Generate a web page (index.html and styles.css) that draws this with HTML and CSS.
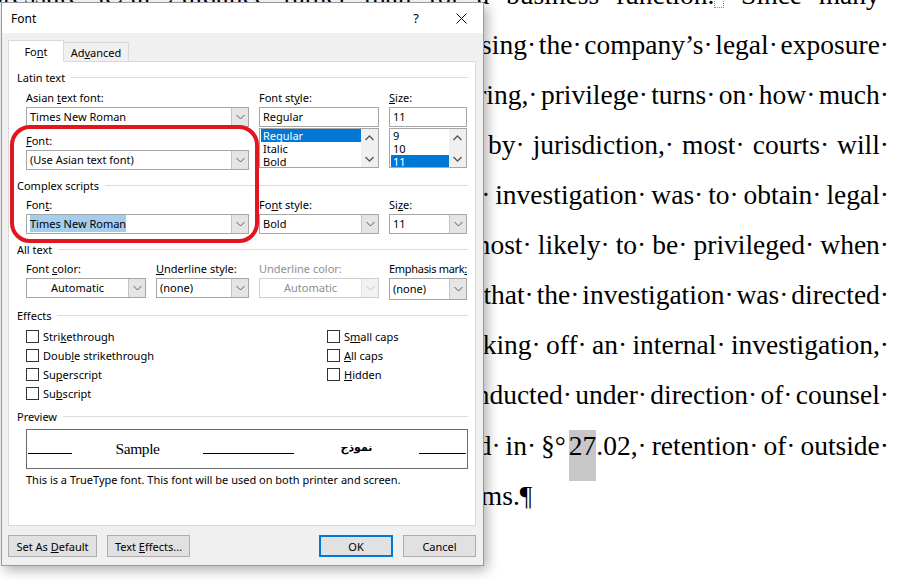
FILE: index.html
```html
<!DOCTYPE html>
<html>
<head>
<meta charset="utf-8">
<title>Font</title>
<link rel="stylesheet" href="styles.css">
</head>
<body>
<div class="doc">
  <div class="ln g75"><span>pressure·</span><span>legal·</span><span>guidance·</span><span>rather·</span><span>than·</span><span>for·</span><span>a·</span><span>business·</span><span>function.<i class="anchor"></i>·</span><span>Since·</span><span>many·</span></div>
  <div class="ln g27"><span>assessing·</span><span>the·</span><span>company’s·</span><span>legal·</span><span>exposure·</span></div>
  <div class="ln g34"><span>monitoring,·</span><span>privilege·</span><span>turns·</span><span>on·</span><span>how·</span><span>much·</span></div>
  <div class="ln g80"><span>varies·</span><span>by·</span><span>jurisdiction,·</span><span>most·</span><span>courts·</span><span>will·</span></div>
  <div class="ln g49"><span>the·</span><span>investigation·</span><span>was·</span><span>to·</span><span>obtain·</span><span>legal·</span></div>
  <div class="ln g61"><span>are·</span><span>most·</span><span>likely·</span><span>to·</span><span>be·</span><span>privileged·</span><span>when·</span></div>
  <div class="ln g29"><span>show·</span><span>that·</span><span>the·</span><span>investigation·</span><span>was·</span><span>directed·</span></div>
  <div class="ln g53"><span>kicking·</span><span>off·</span><span>an·</span><span>internal·</span><span>investigation,·</span></div>
  <div class="ln g33"><span>conducted·</span><span>under·</span><span>direction·</span><span>of·</span><span>counsel·</span></div>
  <div class="ln g49"><span>described·</span><span>in·</span><span>§<i class="nbsp">°</i><b class="hl">27</b>.02,·</span><span>retention·</span><span>of·</span><span>outside·</span></div>
  <div class="ln last"><span>mechanisms.¶</span></div>
</div>

<div class="dialog">
  <div class="titlebar">
    <span class="title">Font</span>
    <span class="tbtn">?</span>
    <span class="tbtn"><svg width="11" height="11" viewBox="0 0 11 11"><path d="M0.5 0.5L10.5 10.5M10.5 0.5L0.5 10.5" stroke="#111" stroke-width="1" fill="none"/></svg></span>
  </div>
  <div class="dbody">
    <div class="tabs">
      <div class="tab active"><span>Fo<u>n</u>t</span></div>
      <div class="tab adv"><span>Ad<u>v</u>anced</span></div>
    </div>
    <div class="panel">
      <div class="grp"><span>Latin text</span><i></i></div>
      <div class="fields latin">
        <div class="col">
          <div class="lbl">Asian <u>t</u>ext font:</div>
          <div class="combo"><span class="val">Times New Roman</span><span class="arr"><svg width="9" height="6" viewBox="0 0 9 6"><path d="M0.5 1L4.5 5L8.5 1" fill="none" stroke="#5c5c5c"/></svg></span></div>
          <div class="lbl sp"><u>F</u>ont:</div>
          <div class="combo"><span class="val">(Use Asian text font)</span><span class="arr"><svg width="9" height="6" viewBox="0 0 9 6"><path d="M0.5 1L4.5 5L8.5 1" fill="none" stroke="#5c5c5c"/></svg></span></div>
        </div>
        <div class="col">
          <div class="lbl">Font st<u>y</u>le:</div>
          <div class="input">Regular</div>
          <div class="list">
            <div class="items"><div class="item sel">Regular</div><div class="item">Italic</div><div class="item">Bold</div></div>
            <div class="sb"><svg width="9" height="6" viewBox="0 0 9 6"><path d="M0.5 5L4.5 1L8.5 5" fill="none" stroke="#555" stroke-width="1.3"/></svg><svg width="9" height="6" viewBox="0 0 9 6"><path d="M0.5 1L4.5 5L8.5 1" fill="none" stroke="#555" stroke-width="1.3"/></svg></div>
          </div>
        </div>
        <div class="col">
          <div class="lbl"><u>S</u>ize:</div>
          <div class="input">11</div>
          <div class="list">
            <div class="items"><div class="item">9</div><div class="item">10</div><div class="item sel">11</div></div>
            <div class="sb"><svg width="9" height="6" viewBox="0 0 9 6"><path d="M0.5 5L4.5 1L8.5 5" fill="none" stroke="#555" stroke-width="1.3"/></svg><svg width="9" height="6" viewBox="0 0 9 6"><path d="M0.5 1L4.5 5L8.5 1" fill="none" stroke="#555" stroke-width="1.3"/></svg></div>
          </div>
        </div>
      </div>

      <div class="grp"><span>Complex scripts</span><i></i></div>
      <div class="fields complex">
        <div class="col">
          <div class="lbl">Fon<u>t</u>:</div>
          <div class="combo"><span class="val"><span class="selt">Times New Roman</span></span><span class="arr"><svg width="9" height="6" viewBox="0 0 9 6"><path d="M0.5 1L4.5 5L8.5 1" fill="none" stroke="#5c5c5c"/></svg></span></div>
        </div>
        <div class="col">
          <div class="lbl">Fo<u>n</u>t style:</div>
          <div class="combo"><span class="val">Bold</span><span class="arr"><svg width="9" height="6" viewBox="0 0 9 6"><path d="M0.5 1L4.5 5L8.5 1" fill="none" stroke="#5c5c5c"/></svg></span></div>
        </div>
        <div class="col">
          <div class="lbl">Si<u>z</u>e:</div>
          <div class="combo"><span class="val">11</span><span class="arr"><svg width="9" height="6" viewBox="0 0 9 6"><path d="M0.5 1L4.5 5L8.5 1" fill="none" stroke="#5c5c5c"/></svg></span></div>
        </div>
      </div>

      <div class="grp"><span>All text</span><i></i></div>
      <div class="fields alltext">
        <div class="col">
          <div class="lbl">Font <u>c</u>olor:</div>
          <div class="combo"><span class="val center">Automatic</span><span class="arr"><svg width="9" height="6" viewBox="0 0 9 6"><path d="M0.5 1L4.5 5L8.5 1" fill="none" stroke="#5c5c5c"/></svg></span></div>
        </div>
        <div class="col">
          <div class="lbl"><u>U</u>nderline style:</div>
          <div class="combo"><span class="val">(none)</span><span class="arr"><svg width="9" height="6" viewBox="0 0 9 6"><path d="M0.5 1L4.5 5L8.5 1" fill="none" stroke="#5c5c5c"/></svg></span></div>
        </div>
        <div class="col">
          <div class="lbl dis">Underline color:</div>
          <div class="combo disabled"><span class="val center">Automatic</span><span class="arr"><svg width="9" height="6" viewBox="0 0 9 6"><path d="M0.5 1L4.5 5L8.5 1" fill="none" stroke="#c4c4c4"/></svg></span></div>
        </div>
        <div class="col">
          <div class="lbl tight">Emphasis mark<u>:</u></div>
          <div class="combo tall"><span class="val">(none)</span><span class="arr"><svg width="9" height="6" viewBox="0 0 9 6"><path d="M0.5 1L4.5 5L8.5 1" fill="none" stroke="#5c5c5c"/></svg></span></div>
        </div>
      </div>

      <div class="grp"><span>Effects</span><i></i></div>
      <div class="effects">
        <div class="chk"><span class="cb"></span><span>Stri<u>k</u>ethrough</span></div>
        <div class="chk"><span class="cb"></span><span>S<u>m</u>all caps</span></div>
        <div class="chk"><span class="cb"></span><span>Doub<u>l</u>e strikethrough</span></div>
        <div class="chk"><span class="cb"></span><span><u>A</u>ll caps</span></div>
        <div class="chk"><span class="cb"></span><span>Su<u>p</u>erscript</span></div>
        <div class="chk"><span class="cb"></span><span><u>H</u>idden</span></div>
        <div class="chk"><span class="cb"></span><span>Su<u>b</u>script</span></div>
      </div>

      <div class="grp pv"><span>Preview</span><i></i></div>
      <div class="preview">
        <div class="pv-row">
          <span class="pv-pad"></span>
          <span class="pv-line l1"></span>
          <span class="pv-box s1"><span class="sample">Sample</span></span>
          <span class="pv-line l2"></span>
          <span class="pv-box s2"><span class="arabic" dir="rtl">نموذج</span></span>
          <span class="pv-line l3"></span>
        </div>
      </div>
      <div class="caption">This is a TrueType font. This font will be used on both printer and screen.</div>
    </div>

    <div class="buttons">
      <div class="btn b1"><span>Set As <u>D</u>efault</span></div>
      <div class="btn b2"><span>Text <u>E</u>ffects...</span></div>
      <div class="btn b3 def"><span>OK</span></div>
      <div class="btn b4"><span>Cancel</span></div>
    </div>
  </div>
  <div class="redbox"></div>
</div>
</body>
</html>
```

FILE: styles.css
```css
html, body {
  margin: 0;
  padding: 0;
  width: 917px;
  height: 580px;
  overflow: hidden;
  background: #fff;
}

/* ---------- document behind the dialog ---------- */
.doc {
  margin-top: -30.3px;
  padding-right: 28px;
  font-family: "Liberation Serif", "Times New Roman", serif;
  font-size: 27.5px;
  line-height: 50.1px;
  color: #000;
}
.ln {
  display: flex;
  justify-content: flex-end;
  white-space: nowrap;
  height: 50.1px;
}
.ln > span { flex: none; }
.ln.last { justify-content: flex-start; padding-left: 377px; }
.g27 { column-gap: 2.7px; }
.g29 { column-gap: 2.9px; }
.g33 { column-gap: 3.3px; }
.g34 { column-gap: 3.4px; }
.g49 { column-gap: 4.9px; }
.g53 { column-gap: 5.3px; }
.g61 { column-gap: 6.1px; }
.g75 { column-gap: 7.5px; }
.g80 { column-gap: 8px; }
.anchor {
  display: inline-block;
  width: 8px;
  height: 12px;
  border: 1px dotted #8a8a8a;
  vertical-align: -4px;
}
.nbsp {
  font-style: normal;
  display: inline-block;
  width: 14px;
  overflow: visible;
}
.hl {
  font-weight: normal;
  background: #c7c7c7;
  padding-bottom: 20px;
}

/* ---------- dialog ---------- */
.dialog {
  position: absolute;
  left: 1px;
  top: 2px;
  width: 483px;
  height: 564px;
  box-sizing: border-box;
  border: 1px solid #9a9a9a;
  background: #f0f0f0;
  box-shadow: 3px 4px 12px rgba(0, 0, 0, 0.32);
  font-family: "Noto Sans", sans-serif;
  font-size: 11px;
  color: #000;
  display: flex;
  flex-direction: column;
}
.titlebar {
  height: 30px;
  background: #fff;
  display: flex;
  align-items: center;
  padding-left: 9px;
  padding-right: 7px;
}
.title { flex: 1; font-size: 12px; }
.tbtn {
  width: 30px;
  display: flex;
  justify-content: center;
  align-items: center;
  font-size: 13px;
}
.tbtn + .tbtn { margin-left: 15px; }

.dbody {
  flex: 1;
  padding: 7px 7px 0 6px;
  display: flex;
  flex-direction: column;
}
.tabs {
  height: 21px;
  display: flex;
  align-items: flex-end;
}
.tab {
  box-sizing: border-box;
  height: 19px;
  border: 1px solid #d9d9d9;
  border-bottom: none;
  background: #f0f0f0;
  display: flex;
  align-items: center;
  justify-content: center;
}
.tab.active {
  width: 56px;
  height: 22px;
  margin-bottom: -1px;
  background: #fff;
  position: relative;
  z-index: 1;
  padding-bottom: 1px;
}
.tab.adv { width: 66px; margin-left: -1px; }

.panel {
  box-sizing: border-box;
  height: 465px;
  border: 1px solid #d9d9d9;
  background: #fff;
  padding: 0 7px 0 8px;
}
.grp {
  height: 16px;
  margin-top: 7px;
  display: flex;
  align-items: center;
}
.grp.pv { margin-top: 5px; }
.grp i {
  flex: 1;
  height: 1px;
  background: #dcdcdc;
  margin-left: 6px;
}

.fields {
  display: grid;
  column-gap: 10px;
  margin-left: 9px;
  margin-top: 4px;
}
.latin { grid-template-columns: 223px 120px 78px; margin-top: 5px; }
.complex { grid-template-columns: 223px 120px 78px; }
.alltext { grid-template-columns: 120px 93px 120px 78px; }

.lbl {
  height: 16px;
  line-height: 16px;
  margin-bottom: 1px;
  white-space: nowrap;
}
.lbl.sp { margin-top: 6px; }
.lbl.dis { color: #8f8f8f; }
.lbl.tight { letter-spacing: -0.3px; }

.combo, .input {
  box-sizing: border-box;
  height: 20px;
  border: 1px solid #a6a6a6;
  background: #fff;
  display: flex;
}
.combo.tall { height: 22px; }
.combo .val {
  flex: 1;
  padding-left: 3px;
  line-height: 18px;
  white-space: nowrap;
  overflow: hidden;
}
.combo.tall .val { line-height: 20px; }
.combo .val.center { text-align: center; padding-left: 0; }
.combo .arr {
  width: 16px;
  background: #e5e5e5;
  border-left: 1px solid #c4c4c4;
  display: flex;
  align-items: center;
  justify-content: center;
}
.combo.disabled { border-color: #cfcfcf; }
.combo.disabled .val { color: #8d8d8d; }
.combo.disabled .arr { background: #f2f2f2; border-left-color: #e0e0e0; }
.selt { background: #a4cdf0; padding: 1px 0; }
.input { padding-left: 3px; line-height: 18px; }

.list {
  box-sizing: border-box;
  height: 40px;
  margin-top: 1px;
  border: 1px solid #a6a6a6;
  background: #fff;
  display: flex;
  overflow: hidden;
}
.items { flex: 1; padding: 0 0 0 1px; }
.item { height: 13px; line-height: 13px; padding-left: 2px; }
.item.sel { background: #0078d7; color: #fff; }
.sb {
  width: 17px;
  background: #f0f0f0;
  display: flex;
  flex-direction: column;
  align-items: center;
  justify-content: space-between;
  padding: 6px 0 5px;
  box-sizing: border-box;
}

.effects {
  display: grid;
  grid-template-columns: 301px 1fr;
  margin-left: 9px;
  margin-top: 4px;
}
.chk {
  height: 19px;
  display: flex;
  align-items: center;
}
.cb {
  box-sizing: border-box;
  width: 13px;
  height: 13px;
  border: 1px solid #333;
  background: #fff;
  margin-right: 4px;
}

.preview {
  box-sizing: border-box;
  height: 40px;
  margin: 5px 0 0 9px;
  border: 1px solid #6b6b6b;
}
.pv-row {
  height: 27px;
  display: flex;
  align-items: flex-end;
}
.pv-pad { width: 1px; }
.pv-line { height: 1px; background: #000; margin-bottom: 3px; }
.l1 { width: 44px; }
.l2 { width: 91px; }
.l3 { width: 47px; }
.pv-box { display: flex; justify-content: center; }
.s1 { width: 131px; }
.s2 { width: 125px; }
.sample {
  font-family: "Liberation Serif", "Times New Roman", serif;
  font-size: 15.5px;
  letter-spacing: -0.4px;
  line-height: 17px;
}
.arabic {
  font-family: "DejaVu Sans", sans-serif;
  font-weight: bold;
  font-size: 11px;
  line-height: 18px;
}
.caption {
  margin: 3px 0 0 9px;
  height: 16px;
  line-height: 16px;
}

.buttons {
  display: flex;
  margin-top: 9px;
}
.btn {
  box-sizing: border-box;
  height: 22px;
  border: 1px solid #adadad;
  background: #e1e1e1;
  display: flex;
  align-items: center;
  justify-content: center;
  white-space: nowrap;
}
.b1 { width: 89px; }
.b2 { width: 83px; margin-left: 10px; }
.b3 { width: 74px; margin-left: auto; }
.b4 { width: 73px; margin-left: 10px; }
.btn.def { border: 2px solid #0078d7; }

.redbox {
  position: absolute;
  left: 8px;
  top: 122px;
  width: 249px;
  height: 118px;
  box-sizing: border-box;
  border: 4px solid #e3161f;
  border-radius: 20px;
}
```
